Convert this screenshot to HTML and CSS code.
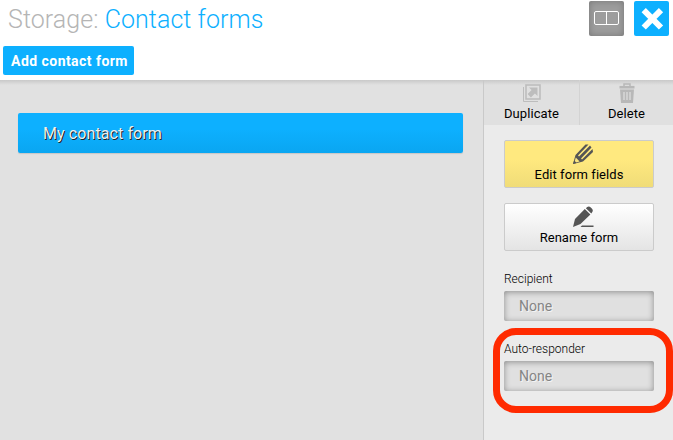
FILE: index.html
```html
<!DOCTYPE html>
<html lang="en">
<head>
<meta charset="utf-8">
<title>Storage: Contact forms</title>
<link rel="stylesheet" href="styles.css">
</head>
<body>
<div class="app">
  <header class="header">
    <div class="heading">
      <h1 class="title">Storage: <span class="accent">Contact forms</span></h1>
      <button class="add">Add contact form</button>
    </div>
    <div class="window-tools">
      <button class="tool split" aria-label="Split view">
        <svg width="35" height="35" viewBox="0 0 35 35" fill="none" stroke="#fff" stroke-width="1"><rect x="5.5" y="10.5" width="24" height="13" rx="1.5"/><path d="M17.5 10.5v13"/></svg>
      </button>
      <button class="tool close" aria-label="Close">
        <svg width="35" height="35" viewBox="0 0 35 35" stroke="#fff" stroke-width="6"><path d="M9.7 9.2L27 26.500M27 9.2L9.700 26.500"/></svg>
      </button>
    </div>
  </header>
  <div class="body">
    <main class="list">
      <div class="item"><span>My contact form</span></div>
    </main>
    <aside class="side">
      <nav class="actions">
        <a class="action">
          <svg width="20" height="20" viewBox="0 0 20 20" fill="none" stroke="#bdbdbd"><path d="M1.5 4v14.500h14.500" stroke-width="1"/><rect x="4" y="2" width="14" height="14" stroke-width="1.600"/><path d="M7 4.500h8.500v8.500l-2.600-2.600-4 4-3.300-3.300 4-4z" fill="#bdbdbd" stroke="none"/></svg>
          <span>Duplicate</span>
        </a>
        <a class="action">
          <svg width="20" height="20" viewBox="0 0 20 20" fill="none" stroke="#b8b8b8"><path d="M7 3V1h6v2" stroke-width="1.500"/><path d="M2.500 4.200h15" stroke-width="2.600"/><path d="M3 6.500h14l-1 13.500h-12z" fill="#b8b8b8" stroke="none"/><path d="M7 9v8M10 9v8M13 9v8" stroke="#e0e0e0" stroke-width="1.200"/></svg>
          <span>Delete</span>
        </a>
      </nav>
      <div class="controls">
        <button class="card edit">
          <svg width="22" height="22" viewBox="0 0 22 22"><path d="M1 21L3.500 12 13.500 1.500l3 0L6 12.500l1 1L18 2.500l1.500 2L9 15.500l1 1L20.500 6l.5 3L11 18.500z" fill="#555"/><path d="M3.800 14.500l3.800 4-3.600 1-1.300-1.300z" fill="#fbe680"/><path d="M1 21l1.200-3.500 2.300 2.500z" fill="#555"/></svg>
          <span>Edit form fields</span>
        </button>
        <button class="card rename">
          <svg width="22" height="22" viewBox="0 0 22 22" fill="#555"><path d="M1 21L3 13 12.800 3l5.600 5.600L8.500 18zM13.900 2.200l1.300-1.100q1.800-1.200 3.600.4l1 1q1.700 1.800.5 3.600l-1 1.300z"/><path d="M10 19.500h11.500v1.500H8.500z"/></svg>
          <span>Rename form</span>
        </button>
        <label class="label">Recipient</label>
        <div class="field">None</div>
        <label class="label">Auto-responder</label>
        <div class="field">None</div>
      </div>
    </aside>
  </div>
  <div class="highlight"></div>
</div>
</body>
</html>
```
FILE: styles.css
```css
* { box-sizing: border-box; }
body { margin: 0; font-family: Roboto, sans-serif; color: #000; }
button { font: inherit; padding: 0; border: 0; }
svg { display: block; }
.app { position: relative; width: 673px; height: 440px; overflow: hidden; display: flex; flex-direction: column; background: #e1e1e1; }
.header { height: 80px; flex: none; display: flex; justify-content: space-between; background: #fff; }
.title { margin: 5px 0 11px 8px; height: 30px; font-size: 25px; line-height: 30px; font-weight: 300; letter-spacing: .06px; color: #b5b5b5; white-space: nowrap; }
.accent { color: #0db0ff; }
.add { display: block; margin-left: 3px; width: 131px; height: 29px; padding-left: 2px; border-radius: 2px; background: #0db0ff; color: #fff; font-size: 14px; font-weight: 700; line-height: 28px; letter-spacing: .45px; white-space: nowrap; }
.window-tools { display: flex; gap: 10px; padding: 1px 4px 0 0; }
.tool { width: 35px; height: 35px; border-radius: 2px; }
.split { background: #9d9d9d; box-shadow: inset 0 0 7px rgba(0,0,0,.25); }
.close { background: #0db0ff; }
.body { flex: 1; display: flex; background: linear-gradient(#c9c9c9, #e1e1e1 5px); }
.list { width: 484px; padding: 33px 20px 0 18px; border-right: 1px solid #c9c9c9; }
.item { width: 445px; height: 40px; padding-left: 25px; border-radius: 2px; background: linear-gradient(#0db0ff 40%, #0aa6f1); box-shadow: 0 1px 1px rgba(0,0,0,.12); font-size: 16px; line-height: 41px; letter-spacing: .1px; color: #eee; text-shadow: 1px 1px 0 #222; }
.side { width: 189px; background: #ebebeb; }
.actions { display: flex; height: 45px; background: linear-gradient(#c9c9c9, #e0e0e0 5px); }
.action { width: 96px; padding-top: 3px; display: flex; flex-direction: column; align-items: center; gap: 1px; font-size: 13px; line-height: 20px; letter-spacing: .1px; }
.action:first-child { width: 95px; }
.action + .action { width: 94px; border-left: 1px solid #d3d3d3; }
.controls { padding: 15px 19px 0 20px; }
.card { display: flex; flex-direction: column; align-items: center; width: 150px; height: 48px; padding: 2px 0 0 8px; border: 1px solid #cbcbcb; border-radius: 2px; font-size: 13px; line-height: 20px; letter-spacing: .05px; color: #000; }
.card span { margin-left: -8px; }
.edit { background: linear-gradient(#ffe97f 40%, #f0dc78); }
.rename { margin-top: 15px; background: linear-gradient(#fff, #e4e4e4); letter-spacing: 0; }
.label { display: block; margin-top: 20px; height: 16px; font-size: 12px; line-height: 16px; font-weight: 300; }
.field { margin-top: 4px; width: 150px; height: 30px; padding-left: 15px; border-radius: 2px; background: #e0e0e0; box-shadow: inset 0 1px 6px rgba(0,0,0,.38); color: #858585; font-size: 14px; line-height: 30px; letter-spacing: .05px; text-shadow: 1px 1px 0 #f4f4f4; }
.highlight { position: absolute; left: 493px; top: 328px; width: 180px; height: 85px; border: 7px solid #ff2a00; border-radius: 23px; }
```
